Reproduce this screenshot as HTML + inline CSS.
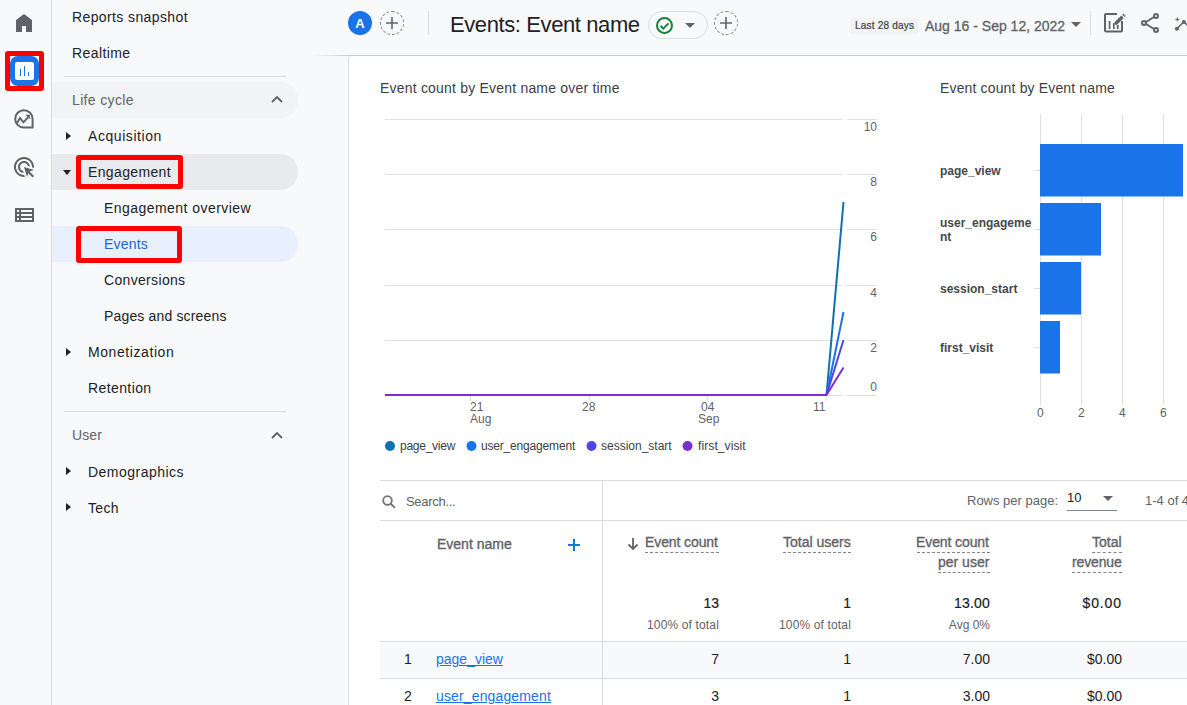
<!DOCTYPE html>
<html><head><meta charset="utf-8">
<style>
html,body{margin:0;padding:0;}
body{width:1187px;height:705px;overflow:hidden;position:relative;background:#f8f9fa;font-family:"Liberation Sans",sans-serif;color:#202124;}
.a{position:absolute;}
.t{position:absolute;white-space:nowrap;line-height:1;}
.n{font-size:14px;color:#202124;letter-spacing:0.4px;}
.rail{position:absolute;left:0;top:0;width:51px;height:705px;background:#f8f9fa;border-right:1px solid #dadce0;}
.pill{position:absolute;left:52px;width:246px;height:36px;border-radius:0 18px 18px 0;}
.redbox{position:absolute;border:5px solid #ff0000;border-radius:3px;box-sizing:border-box;}
.tri-r{position:absolute;width:0;height:0;border-top:4px solid transparent;border-bottom:4px solid transparent;border-left:5px solid #202124;}
.tri-d{position:absolute;width:0;height:0;border-left:4px solid transparent;border-right:4px solid transparent;border-top:5px solid #202124;}
.card{position:absolute;left:348px;top:55px;width:900px;height:700px;background:#fff;border-left:1px solid #dadce0;border-top:1px solid #c8cacd;border-radius:4px 0 0 0;}
.ax{font-size:12px;color:#5f6368;}
.hd{font-size:14px;color:#5f6368;-webkit-text-stroke:0.35px #5f6368;}
.md{-webkit-text-stroke:0.2px currentColor;}
.dash{position:absolute;height:0;border-top:1px dashed #80868b;}
</style></head><body>

<!-- left rail -->
<div class="rail"></div>
<svg class="a" style="left:12px;top:11px" width="24" height="24" viewBox="0 -960 960 960"><path fill="#5f6368" d="M160-120v-480l320-240 320 240v480H560v-240H400v240H160Z"/></svg>
<div class="redbox" style="left:5px;top:51px;width:39px;height:40px;"></div>
<div class="a" style="left:10px;top:56px;width:29px;height:30px;background:#1a73e8;border-radius:8px;"></div>
<div class="a" style="left:15px;top:62px;width:19px;height:18px;background:#fff;border-radius:2px;"></div>
<div class="a" style="left:19.7px;top:69px;width:1.3px;height:7px;background:#1a73e8;"></div>
<div class="a" style="left:23.9px;top:66px;width:1.3px;height:10px;background:#1a73e8;"></div>
<div class="a" style="left:27.9px;top:72px;width:1.3px;height:4px;background:#1a73e8;"></div>
<!-- explore -->
<svg class="a" style="left:12px;top:107px" width="24" height="24" viewBox="0 0 24 24"><path fill="none" stroke="#5f6368" stroke-width="2" d="M20.6 11.9V20.6H12A8.7 8.7 0 1 1 20.6 11.9Z"/><path fill="none" stroke="#5f6368" stroke-width="1.9" stroke-linejoin="miter" d="M5 16.3l3-5.3 3.4 4.3 4.6-5"/><path fill="#5f6368" d="M13.3 7.8h4.6v4.6z"/></svg>
<!-- ads click -->
<svg class="a" style="left:12.3px;top:155px" width="24" height="24" viewBox="0 0 24 24"><path fill="#5f6368" d="M11.71 17.99C8.53 17.84 6 15.22 6 12c0-3.31 2.69-6 6-6 3.22 0 5.84 2.53 5.99 5.71l-2.1-.63C15.48 9.31 13.89 8 12 8c-2.21 0-4 1.790-4 4 0 1.89 1.31 3.48 3.080 3.89l.63 2.1zM22 12c0 .3-.01.6-.04.9l-1.970-.59c.01-.1.01-.21.01-.31 0-4.42-3.58-8-8-8s-8 3.58-8 8 3.58 8 8 8c.1 0 .21 0 .31-.01l.59 1.97c-.3.03-.6.04-.9.04-5.52 0-10-4.48-10-10S6.48 2 12 2s10 4.48 10 10zm-3.77 4.26L22 15l-10-3 3 10 1.26-3.77 4.27 4.27 1.48-1.48-4.28-4.26z"/></svg>
<!-- list -->
<svg class="a" style="left:12px;top:203px" width="24" height="24" viewBox="0 0 24 24"><path fill="#5f6368" d="M3 5v14h19V5H3zm4 2v2H5V7h2zm-2 6v-2h2v2H5zm0 2h2v2H5v-2zm15 2H9v-2h11v2zm0-4H9v-2h11v2zm0-4H9V7h11v2z"/></svg>

<!-- nav -->
<div class="t n" style="left:72px;top:10px;letter-spacing:0.39px;">Reports snapshot</div>
<div class="t n" style="left:72px;top:46px;letter-spacing:0.4px;">Realtime</div>
<div class="a" style="left:64px;top:76px;width:222px;height:1px;background:#dadce0;"></div>
<div class="pill" style="top:82px;background:#f1f3f4;"></div>
<div class="t n" style="left:72px;top:93px;color:#5f6368;letter-spacing:0.36px;">Life cycle</div>
<svg class="a" style="left:270px;top:93px" width="14" height="12" viewBox="0 0 14 12"><path fill="none" stroke="#5f6368" stroke-width="1.8" d="M2 9l5-5 5 5"/></svg>
<div class="tri-r" style="left:66px;top:132px;"></div>
<div class="t n" style="left:88px;top:129px;letter-spacing:0.57px;">Acquisition</div>
<div class="pill" style="top:154px;background:#e8eaed;"></div>
<div class="tri-d" style="left:63px;top:170px;"></div>
<div class="t n" style="left:88px;top:165px;letter-spacing:0.36px;">Engagement</div>
<div class="redbox" style="left:76px;top:155px;width:107px;height:34px;"></div>
<div class="t n" style="left:104px;top:201px;letter-spacing:0.45px;">Engagement overview</div>
<div class="pill" style="top:226px;background:#e8f0fe;"></div>
<div class="t n" style="left:104px;top:237px;color:#1967d2;letter-spacing:0.2px;">Events</div>
<div class="redbox" style="left:76px;top:226px;width:106px;height:37px;"></div>
<div class="t n" style="left:104px;top:273px;letter-spacing:0.33px;">Conversions</div>
<div class="t n" style="left:104px;top:309px;letter-spacing:0.16px;">Pages and screens</div>
<div class="tri-r" style="left:66px;top:348px;"></div>
<div class="t n" style="left:88px;top:345px;letter-spacing:0.58px;">Monetization</div>
<div class="t n" style="left:88px;top:381px;letter-spacing:0.4px;">Retention</div>
<div class="a" style="left:64px;top:411px;width:222px;height:1px;background:#dadce0;"></div>
<div class="t n" style="left:72px;top:428px;color:#5f6368;letter-spacing:0.11px;">User</div>
<svg class="a" style="left:270px;top:429px" width="14" height="12" viewBox="0 0 14 12"><path fill="none" stroke="#5f6368" stroke-width="1.8" d="M2 9l5-5 5 5"/></svg>
<div class="tri-r" style="left:66px;top:467px;"></div>
<div class="t n" style="left:88px;top:465px;letter-spacing:0.48px;">Demographics</div>
<div class="tri-r" style="left:66px;top:503px;"></div>
<div class="t n" style="left:88px;top:501px;letter-spacing:0.36px;">Tech</div>

<!-- header -->
<div class="a" style="left:315px;top:55px;width:872px;height:1px;background:linear-gradient(90deg,rgba(200,202,205,0),#c8cacd 34px);"></div>
<div class="a" style="left:348px;top:11px;width:24px;height:24px;border-radius:50%;background:#1a73e8;"></div>
<div class="t" style="left:348px;top:17px;width:24px;text-align:center;font-size:13px;font-weight:700;color:#fff;">A</div>
<div class="a" style="left:380px;top:11px;width:24px;height:24px;border-radius:50%;border:1px dashed #80868b;box-sizing:border-box;"></div>
<svg class="a" style="left:380px;top:11px" width="24" height="24" viewBox="0 0 24 24"><path stroke="#5f6368" stroke-width="1.6" d="M6 12h12M12 6v12"/></svg>
<div class="a" style="left:428px;top:11px;width:1px;height:24px;background:#dadce0;"></div>
<div class="t" style="left:450px;top:14px;font-size:22px;color:#202124;letter-spacing:-0.4px;">Events: Event name</div>
<div class="a" style="left:648px;top:11px;width:60px;height:28px;border-radius:14px;border:1px solid #dadce0;box-sizing:border-box;"></div>
<svg class="a" style="left:655px;top:16px" width="19" height="19" viewBox="0 0 19 19"><circle cx="9.5" cy="9.5" r="7.5" fill="none" stroke="#188038" stroke-width="2"/><path fill="none" stroke="#188038" stroke-width="2" d="M5.5 9.8l2.8 2.8 5.2-5.2"/></svg>
<div class="a" style="left:685px;top:23px;width:0;height:0;border-left:5px solid transparent;border-right:5px solid transparent;border-top:5px solid #5f6368;"></div>
<div class="a" style="left:714px;top:11px;width:24px;height:24px;border-radius:50%;border:1px dashed #80868b;box-sizing:border-box;"></div>
<svg class="a" style="left:714px;top:11px" width="24" height="24" viewBox="0 0 24 24"><path stroke="#5f6368" stroke-width="1.6" d="M6 12h12M12 6v12"/></svg>

<div class="a" style="left:851px;top:18px;width:68px;height:16px;background:#f1f3f4;"></div>
<div class="t md" style="left:855px;top:20.5px;font-size:10px;color:#3c4043;letter-spacing:0.2px;">Last 28 days</div>
<div class="t" style="left:925px;top:19px;font-size:14px;color:#5f6368;-webkit-text-stroke:0.3px #5f6368;">Aug 16 - Sep 12, 2022</div>
<div class="a" style="left:1071px;top:22px;width:0;height:0;border-left:5px solid transparent;border-right:5px solid transparent;border-top:5px solid #5f6368;"></div>
<div class="a" style="left:1090px;top:11px;width:1px;height:24px;background:#dadce0;"></div>
<svg class="a" style="left:1102px;top:11px" width="24" height="24" viewBox="0 0 24 24"><path fill="none" stroke="#5f6368" stroke-width="2" stroke-linejoin="round" d="M15 3H4a1 1 0 0 0-1 1v15.5a1 1 0 0 0 1 1h15a1 1 0 0 0 1-1V10"/><path fill="#5f6368" d="M6.7 10h1.7v8H6.7zM11 12h1.6v6H11zM14.8 14h1.8v4h-1.8z"/><path fill="#5f6368" d="M12.5 11.2l6.8-6.8 2.5 2.5-6.8 6.8H12.5z M20.2 3.5l1-1 2.5 2.5-1 1z"/></svg>
<svg class="a" style="left:1138px;top:11px" width="24" height="24" viewBox="0 0 24 24"><g fill="none" stroke="#5f6368" stroke-width="2"><circle cx="18" cy="5" r="2"/><circle cx="6" cy="12" r="2"/><circle cx="18" cy="19" r="2"/><path d="M8 11l8-5M8 13l8 5"/></g></svg>
<svg class="a" style="left:1172px;top:11px" width="24" height="24" viewBox="0 0 24 24"><path fill="none" stroke="#5f6368" stroke-width="1.6" d="M4.9 17.8l7-7 4 4 5-5"/><g fill="#5f6368"><circle cx="4.9" cy="17.8" r="2"/><circle cx="11.8" cy="10.9" r="2"/></g><path stroke="#5f6368" stroke-width="1" d="M3.4 8.4h4M5.4 6.4v4"/></svg>

<!-- card -->
<div class="card"></div>

<!-- line chart -->
<div class="t" style="left:380px;top:81px;font-size:14px;color:#3c4043;letter-spacing:0.2px;">Event count by Event name over time</div>
<svg class="a" style="left:0;top:0" width="1187" height="705">
  <g stroke="#dfe0e3" stroke-width="1">
    <path d="M385 119.5H843M847 119.5H877"/>
    <path d="M385 174.5H843M847 174.5H877"/>
    <path d="M385 229.5H843M847 229.5H877"/>
    <path d="M385 285.5H843M847 285.5H877"/>
    <path d="M385 340.5H843M847 340.5H877"/>
    <path d="M826 395.5H843M847 395.5H877"/>
    <path d="M470.5 396V401M589.5 396V401M707.5 396V401M826.5 396V401"/>
  </g>
  <g fill="none" stroke-width="2" stroke-linejoin="round">
    <path stroke="#1170ae" d="M826.5 395L843.5 202"/>
    <path stroke="#1a73e8" d="M826.5 395L843.5 312"/>
    <path stroke="#4f46e5" d="M826.5 395L843.5 340"/>
    <path stroke="#7c2fcf" d="M385 395H826.5L843.5 367.5"/>
  </g>
  <g fill="#1170ae"><circle cx="390" cy="446" r="5"/></g>
  <g fill="#1a73e8"><circle cx="471.5" cy="446" r="5"/></g>
  <g fill="#4f46e5"><circle cx="591.5" cy="446" r="5"/></g>
  <g fill="#7c2fcf"><circle cx="687.5" cy="446" r="5"/></g>
  <!-- bar chart -->
  <g stroke="#dfe0e3" stroke-width="1">
    <path d="M1040.5 114V405M1081.5 114V405M1122.5 114V405M1163.5 114V405"/>
    <path d="M1034 170.5H1040M1034 229.5H1040M1034 288.5H1040M1034 347.5H1040"/>
  </g>
  <g fill="#1a73e8">
    <rect x="1040" y="144" width="143" height="52.5"/>
    <rect x="1040" y="203" width="61" height="52.5"/>
    <rect x="1040" y="262" width="41" height="52.5"/>
    <rect x="1040" y="321" width="20" height="52.5"/>
  </g>
</svg>
<div class="t ax" style="right:310px;top:121px;">10</div>
<div class="t ax" style="right:310px;top:176px;">8</div>
<div class="t ax" style="right:310px;top:231px;">6</div>
<div class="t ax" style="right:310px;top:287px;">4</div>
<div class="t ax" style="right:310px;top:342px;">2</div>
<div class="t ax" style="right:310px;top:381px;">0</div>
<div class="t ax" style="left:470px;top:401px;">21</div>
<div class="t ax" style="left:470px;top:413px;">Aug</div>
<div class="t ax" style="left:582px;top:401px;">28</div>
<div class="t ax" style="left:701px;top:401px;">04</div>
<div class="t ax" style="left:698px;top:413px;">Sep</div>
<div class="t ax" style="left:813px;top:401px;">11</div>
<div class="t" style="left:400px;top:440px;font-size:12px;color:#3c4043;letter-spacing:-0.25px;">page_view</div>
<div class="t" style="left:481px;top:440px;font-size:12px;color:#3c4043;letter-spacing:-0.18px;">user_engagement</div>
<div class="t" style="left:601px;top:440px;font-size:12px;color:#3c4043;">session_start</div>
<div class="t" style="left:698px;top:440px;font-size:12px;color:#3c4043;letter-spacing:0.1px;">first_visit</div>

<div class="t" style="left:940px;top:81px;font-size:14px;color:#3c4043;letter-spacing:0.15px;">Event count by Event name</div>
<div class="t" style="left:940px;top:165px;font-size:12px;font-weight:700;color:#45484c;">page_view</div>
<div class="t" style="left:940px;top:217px;font-size:12px;font-weight:700;color:#45484c;">user_engageme</div>
<div class="t" style="left:940px;top:231px;font-size:12px;font-weight:700;color:#45484c;">nt</div>
<div class="t" style="left:940px;top:283px;font-size:12px;font-weight:700;color:#45484c;">session_start</div>
<div class="t" style="left:940px;top:342px;font-size:12px;font-weight:700;color:#45484c;">first_visit</div>
<div class="t ax" style="left:1037px;top:407px;">0</div>
<div class="t ax" style="left:1078px;top:407px;">2</div>
<div class="t ax" style="left:1119px;top:407px;">4</div>
<div class="t ax" style="left:1160px;top:407px;">6</div>

<!-- table -->
<div class="a" style="left:380px;top:480px;width:807px;height:1px;background:#dadce0;"></div>
<div class="a" style="left:380px;top:520px;width:807px;height:1px;background:#dadce0;"></div>
<div class="a" style="left:602px;top:480px;width:1px;height:225px;background:#dadce0;"></div>
<div class="a" style="left:380px;top:641px;width:807px;height:1px;background:#dadce0;"></div>
<div class="a" style="left:380px;top:642px;width:807px;height:36px;background:#f8f9fa;"></div>
<div class="a" style="left:602px;top:642px;width:1px;height:36px;background:#dadce0;"></div>
<div class="a" style="left:380px;top:678px;width:807px;height:1px;background:#dadce0;"></div>
<svg class="a" style="left:380px;top:493px" width="18" height="18" viewBox="0 0 18 18"><circle cx="7.5" cy="7.5" r="4.3" fill="none" stroke="#70757a" stroke-width="1.8"/><path stroke="#70757a" stroke-width="2" d="M10.6 10.6l4.3 4.3"/></svg>
<div class="t" style="left:406px;top:495px;font-size:13px;color:#5f6368;letter-spacing:-0.3px;">Search...</div>
<div class="t" style="left:967px;top:494px;font-size:13px;color:#5f6368;">Rows per page:</div>
<div class="t" style="left:1067px;top:491px;font-size:13px;color:#202124;">10</div>
<div class="a" style="left:1103px;top:496px;width:0;height:0;border-left:5px solid transparent;border-right:5px solid transparent;border-top:5px solid #5f6368;"></div>
<div class="a" style="left:1067px;top:510px;width:50px;height:1px;background:#80868b;"></div>
<div class="t" style="left:1145px;top:494px;font-size:13px;color:#5f6368;">1-4 of 4</div>

<div class="t hd" style="left:437px;top:537px;">Event name</div>
<svg class="a" style="left:566px;top:537px" width="16" height="16" viewBox="0 0 16 16"><path stroke="#1a73e8" stroke-width="2" d="M2 8h12M8 2v12"/></svg>
<svg class="a" style="left:625px;top:536px" width="16" height="16" viewBox="0 0 16 16"><path fill="none" stroke="#5f6368" stroke-width="1.8" d="M8 2v11M3.5 8.5L8 13l4.5-4.5"/></svg>
<div class="t hd" style="left:645px;top:535px;letter-spacing:-0.1px;">Event count</div>
<div class="dash" style="left:645px;top:552px;width:74px;"></div>
<div class="t hd" style="left:783px;top:535px;">Total users</div>
<div class="dash" style="left:783px;top:552px;width:68px;"></div>
<div class="t hd" style="left:916px;top:535px;letter-spacing:-0.1px;">Event count</div>
<div class="dash" style="left:917px;top:552px;width:73px;"></div>
<div class="t hd" style="left:938px;top:555px;">per user</div>
<div class="dash" style="left:938px;top:572px;width:52px;"></div>
<div class="t hd" style="left:1092px;top:535px;">Total</div>
<div class="dash" style="left:1092px;top:552px;width:30px;"></div>
<div class="t hd" style="left:1072px;top:555px;letter-spacing:-0.15px;">revenue</div>
<div class="dash" style="left:1072px;top:572px;width:50px;"></div>

<div class="t md" style="right:468px;top:596px;font-size:14px;color:#202124;">13</div>
<div class="t" style="right:468px;top:619px;font-size:12px;color:#5f6368;letter-spacing:0.15px;">100% of total</div>
<div class="t md" style="right:336px;top:596px;font-size:14px;color:#202124;">1</div>
<div class="t" style="right:336px;top:619px;font-size:12px;color:#5f6368;letter-spacing:0.15px;">100% of total</div>
<div class="t md" style="right:197px;top:596px;font-size:14px;color:#202124;letter-spacing:0.2px;">13.00</div>
<div class="t" style="right:197px;top:619px;font-size:12px;color:#5f6368;">Avg 0%</div>
<div class="t md" style="right:65px;top:596px;font-size:14px;color:#202124;letter-spacing:0.9px;">$0.00</div>

<div class="t" style="left:404px;top:652px;font-size:14px;color:#202124;">1</div>
<div class="t" style="left:436px;top:652px;font-size:14px;color:#1a73e8;text-decoration:underline;">page_view</div>
<div class="t" style="right:468px;top:652px;font-size:14px;color:#202124;">7</div>
<div class="t" style="right:336px;top:652px;font-size:14px;color:#202124;">1</div>
<div class="t" style="right:197px;top:652px;font-size:14px;color:#202124;">7.00</div>
<div class="t" style="right:65px;top:652px;font-size:14px;color:#202124;">$0.00</div>

<div class="t" style="left:404px;top:689px;font-size:14px;color:#202124;">2</div>
<div class="t" style="left:436px;top:689px;font-size:14px;color:#1a73e8;text-decoration:underline;letter-spacing:0.14px;">user_engagement</div>
<div class="t" style="right:468px;top:689px;font-size:14px;color:#202124;">3</div>
<div class="t" style="right:336px;top:689px;font-size:14px;color:#202124;">1</div>
<div class="t" style="right:197px;top:689px;font-size:14px;color:#202124;">3.00</div>
<div class="t" style="right:65px;top:689px;font-size:14px;color:#202124;">$0.00</div>

</body></html>
